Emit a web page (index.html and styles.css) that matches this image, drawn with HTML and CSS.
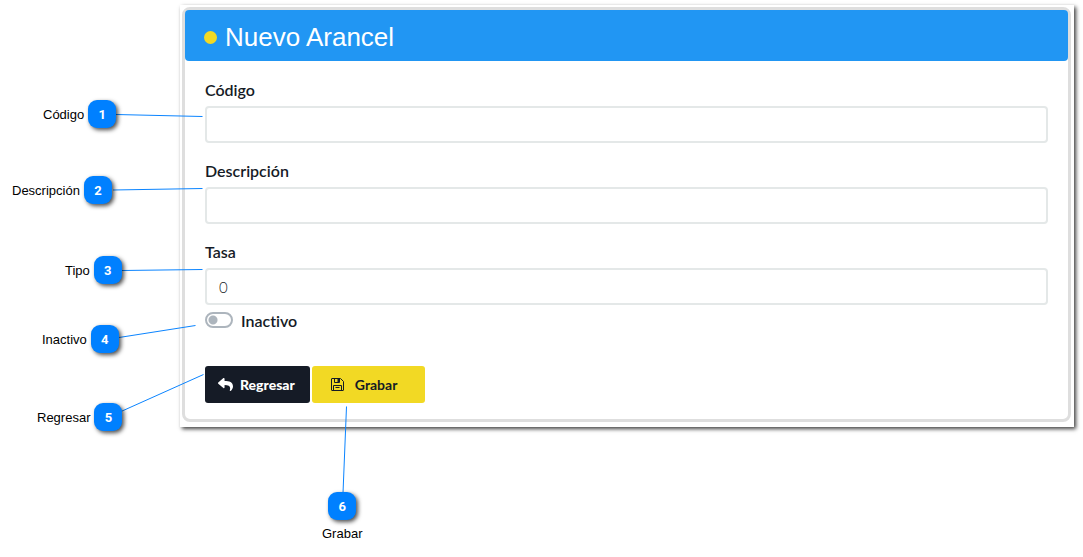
FILE: index.html
```
<!DOCTYPE html>
<html lang="es">
<head>
<meta charset="utf-8">
<title>Nuevo Arancel</title>
<link rel="stylesheet" href="styles.css">
</head>
<body>
<main class="figure">
  <section class="frame">
    <form class="card">
      <header class="card-header">
        <span class="dot"></span>
        <h1 class="title">Nuevo Arancel</h1>
      </header>
      <div class="card-body">
        <div class="field">
          <label class="label" for="codigo">Código</label>
          <input class="input" id="codigo" type="text">
        </div>
        <div class="field">
          <label class="label" for="descripcion">Descripción</label>
          <input class="input" id="descripcion" type="text">
        </div>
        <div class="field">
          <label class="label" for="tasa">Tasa</label>
          <input class="input" id="tasa" type="text" value="0">
        </div>
        <div class="switch-row">
          <input class="switch" id="inactivo" type="checkbox">
          <label class="label" for="inactivo">Inactivo</label>
        </div>
        <div class="actions">
          <button class="btn btn-dark" type="button">
            <svg class="icon-reply" viewBox="0 0 512 512" aria-hidden="true"><path fill="currentColor" d="M8.309 189.836L184.313 37.851C199.719 24.546 224 35.347 224 56.015v80.053c160.629 1.839 288 34.032 288 186.258 0 61.441-39.581 122.309-83.333 154.132-13.653 9.931-33.111-2.533-28.077-18.631 45.344-145.012-21.507-183.51-176.59-185.742V360c0 20.7-24.3 31.453-39.687 18.164l-176.004-152c-11.071-9.562-11.086-26.753 0-36.328z"/></svg>
            <span>Regresar</span>
          </button>
          <button class="btn btn-yellow" type="button">
            <svg class="icon-save" viewBox="0 0 13 13" aria-hidden="true"><path fill="none" stroke="currentColor" d="M1 .5h8.5l3 3v8.500q0 .5-.5.5H1q-.5 0-.5-.5V1Q.5.5 1 .5zM2.500 12.500V7.500h8v5M3.500.5v4h5v-4M4.500 9.500h4"/><path fill="currentColor" d="M6.500 1h2v3h-2z"/></svg>
            <span>Grabar</span>
          </button>
        </div>
      </div>
    </form>
  </section>

  <svg class="leaders" width="420" height="557" viewBox="0 0 420 557" aria-hidden="true">
    <path d="M116 114.500L202.500 116.500M113 190L202.500 188.500M122 270.500L202.500 269.500M119 337.500L195.500 325.500M121 411.500L203.500 374.500M343 493L346.500 406.500"/>
  </svg>
  <div class="callout callout-1"><span>Código</span><b class="badge">1</b></div>
  <div class="callout callout-2"><span>Descripción</span><b class="badge">2</b></div>
  <div class="callout callout-3"><span>Tipo</span><b class="badge">3</b></div>
  <div class="callout callout-4"><span>Inactivo</span><b class="badge">4</b></div>
  <div class="callout callout-5"><span>Regresar</span><b class="badge">5</b></div>
  <div class="callout callout-6"><b class="badge">6</b><span>Grabar</span></div>
</main>
</body>
</html>
```
FILE: styles.css
```
* { box-sizing: border-box; }

body {
  margin: 0;
  background: #fff;
  color: #000;
  font-family: "Liberation Sans", Arial, sans-serif;
  font-size: 13px;
}

.figure {
  position: relative;
  min-height: 100vh;
  padding: 5px 9px 0 180px;
}

.frame {
  padding: 2px 3px 5px 2px;
  background: #fff;
  box-shadow: 2px 2px 4px rgba(0, 0, 0, .75);
}

.card {
  border: 3px solid #dedede;
  border-radius: 8px;
  font-family: Lato, sans-serif;
  font-variant-ligatures: none;
  color: #151b26;
}

.card-header {
  display: flex;
  align-items: center;
  gap: 8px;
  height: 51px;
  padding: 0 19px;
  border-radius: 4px;
  background: #2196f3;
}

.dot {
  width: 13px;
  height: 13px;
  margin-top: 3px;
  border-radius: 50%;
  background: #f2d924;
}

.title {
  margin: 2px 0 0;
  color: #fff;
  font: 400 26px/32px "Liberation Sans", Arial, sans-serif;
}

.card-body { padding: 20px 20px 16px; }

.field {
  display: flex;
  flex-direction: column;
  gap: 8px;
}

.field + .field { margin-top: 19px; }

.label {
  font-size: 16px;
  font-weight: 600;
  line-height: 17px;
}

.input {
  width: 100%;
  height: 37px;
  padding: 0 12px;
  border: 2px solid #e4e8e8;
  border-radius: 4px;
  background: #fff;
  color: #151b26;
  font: 300 15px Lato, sans-serif;
}

.switch-row {
  display: flex;
  align-items: flex-start;
  gap: 8px;
  margin-top: 7px;
}

.switch {
  appearance: none;
  width: 28px;
  height: 16px;
  margin: 0;
  border: 2px solid #adb5bd;
  border-radius: 8px;
  background: radial-gradient(circle at 6px 6px, #adb5bd 4px, transparent 5px);
}

.actions {
  display: flex;
  gap: 2px;
  margin-top: 37px;
}

.btn {
  display: flex;
  align-items: center;
  height: 37px;
  border: 0;
  border-radius: 3px;
  font: 700 14px Lato, sans-serif;
}

.btn-dark {
  gap: 7px;
  padding: 0 15px 0 13px;
  background: #151b26;
  color: #fff;
  font-weight: 900;
}

.btn-yellow {
  gap: 11px;
  padding: 0 28px 0 19px;
  background: #f2d924;
  color: #151b26;
}

.icon-reply { width: 15px; height: 15px; }
.icon-save { width: 13px; height: 13px; }

.leaders {
  position: absolute;
  top: 0;
  left: 0;
  pointer-events: none;
  fill: none;
  stroke: #0a84ff;
  stroke-width: 1;
}

.callout {
  position: absolute;
  display: flex;
  align-items: center;
  gap: 4px;
}

.badge {
  display: grid;
  place-items: center;
  width: 28px;
  height: 28px;
  border-radius: 9px;
  background: #0080ff;
  box-shadow: 2px 2px 4px rgba(0, 0, 0, .7);
  color: #fff;
  font: 700 13px Roboto, sans-serif;
}

.callout-1 { left: 43px; top: 100px; }
.callout-2 { left: 12px; top: 176px; }
.callout-3 { left: 65px; top: 256px; }
.callout-4 { left: 42px; top: 325px; }
.callout-5 { left: 37px; top: 403px; }
.callout-6 { left: 322px; top: 492px; flex-direction: column; gap: 6px; }
```
